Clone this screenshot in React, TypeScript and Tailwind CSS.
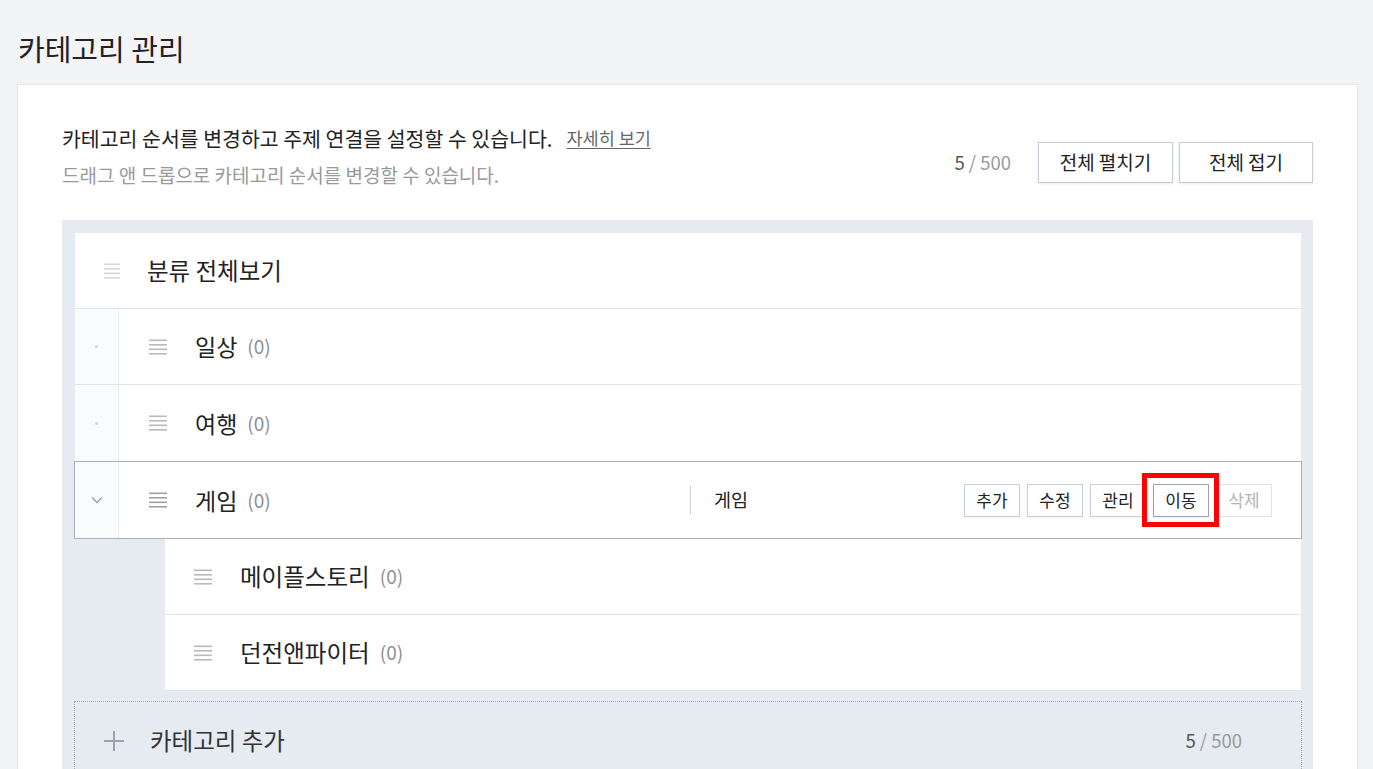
import React from "react";

function DragIcon({ color = "#b7babf", width = 18 }: { color?: string; width?: number }) {
  return (
    <svg width={width} height="16" viewBox={`0 0 ${width} 16`} className="shrink-0">
      <rect x="0" y="0.5" width={width} height="1.6" fill={color} />
      <rect x="0" y="5" width={width} height="1.6" fill={color} />
      <rect x="0" y="9.5" width={width} height="1.6" fill={color} />
      <rect x="0" y="14" width={width} height="1.6" fill={color} />
    </svg>
  );
}

function Chevron() {
  return (
    <svg width="12" height="8" viewBox="0 0 12 8">
      <polyline points="1,1.5 6,6.5 11,1.5" fill="none" stroke="#9a9ea5" strokeWidth="1.3" />
    </svg>
  );
}

function Plus() {
  return (
    <svg width="20" height="20" viewBox="0 0 20 20" className="shrink-0">
      <rect x="0" y="9" width="20" height="2" fill="#9aa2ad" />
      <rect x="9" y="0" width="2" height="20" fill="#9aa2ad" />
    </svg>
  );
}

function Count() {
  return <span className="ml-[10px] text-[19px] text-[#8b9099]">(0)</span>;
}

function Dot() {
  return <span className="block h-[3px] w-[3px] rounded-full bg-[#d2d5da]" />;
}

function LeftCol({ children }: { children?: React.ReactNode }) {
  return (
    <div className="flex h-full w-[44px] shrink-0 items-center justify-center border-r border-[#eceef2] bg-[#fafbfc]">
      {children}
    </div>
  );
}

function SmallBtn({ label, variant = "normal" }: { label: string; variant?: "normal" | "active" | "disabled" }) {
  const cls =
    variant === "active"
      ? "border-[#9ea4ad] text-[#222] shadow-[0_1px_2px_rgba(0,0,0,0.08)]"
      : variant === "disabled"
      ? "border-[#e0e4e9] text-[#b3b5b8]"
      : "border-[#c9cfd8] text-[#222] shadow-[0_1px_2px_rgba(0,0,0,0.06)]";
  return (
    <button className={`flex h-[33px] w-[56px] items-center justify-center border bg-white text-[17px] ${cls}`}>
      {label}
    </button>
  );
}

export default function App() {
  return (
    <div className="min-h-screen bg-[#f3f4f6] font-['Noto_Sans_CJK_KR','Noto_Sans',sans-serif] text-[#222]">
      <div className="h-[84px] pl-[18px] pt-[28px]">
        <h1 className="text-[29px] leading-[40px] font-normal">카테고리 관리</h1>
      </div>
      <div className="ml-[17px] w-[1341px] border border-[#e2e5ea] bg-white px-[44px] pt-[41px] pb-[40px]">
        <div className="flex justify-between">
          <div>
            <div className="flex h-[24px] items-center">
              <span className="text-[20.5px] leading-[24px] text-[#222]">
                카테고리 순서를 변경하고 주제 연결을 설정할 수 있습니다.
              </span>
              <a className="ml-[14px] text-[17.5px] leading-[24px] text-[#666] underline underline-offset-[3px]">자세히 보기</a>
            </div>
            <p className="mt-[13px] h-[24px] text-[19px] leading-[24px] text-[#999]">
              드래그 앤 드롭으로 카테고리 순서를 변경할 수 있습니다.
            </p>
          </div>
          <div className="mt-[16px] flex items-center self-start">
            <span className="mr-[27px] text-[18.5px] text-[#999]">
              <span className="text-[#555]">5</span> / 500
            </span>
            <button className="h-[41px] w-[135px] border border-[#c6ccd5] bg-white text-[19px] text-[#222] shadow-[0_1px_2px_rgba(0,0,0,0.08)]">
              전체 펼치기
            </button>
            <button className="ml-[6px] h-[41px] w-[134px] border border-[#c6ccd5] bg-white text-[19px] text-[#222] shadow-[0_1px_2px_rgba(0,0,0,0.08)]">
              전체 접기
            </button>
          </div>
        </div>

        <div className="mt-[33px] bg-[#e6ebf2] pt-[13px] pl-[13px] pr-[12px] pb-[30px]">
          <div className="flex h-[76px] items-center border-b border-[#e1e5eb] bg-white pl-[29px]">
            <DragIcon color="#d6d8dc" width={16} />
            <span className="ml-[27px] text-[23.5px]">분류 전체보기</span>
          </div>
          <div className="flex h-[76px] items-center border-b border-[#e1e5eb] bg-white">
            <LeftCol>
              <Dot />
            </LeftCol>
            <span className="ml-[30px]">
              <DragIcon />
            </span>
            <span className="ml-[28px] text-[23px]">일상</span>
            <Count />
          </div>
          <div className="flex h-[76px] items-center bg-white">
            <LeftCol>
              <Dot />
            </LeftCol>
            <span className="ml-[30px]">
              <DragIcon />
            </span>
            <span className="ml-[28px] text-[23px]">여행</span>
            <Count />
          </div>
          <div className="-mx-[1px] flex h-[78px] items-center border border-[#a9b0bb] bg-white pr-[29px]">
            <div className="flex h-full w-[615px] shrink-0 items-center">
              <LeftCol>
                <Chevron />
              </LeftCol>
              <span className="ml-[30px]">
                <DragIcon color="#9da1a7" />
              </span>
              <span className="ml-[28px] text-[23px]">게임</span>
              <Count />
            </div>
            <div className="h-[28px] w-[1px] bg-[#c9cdd3]" />
            <span className="ml-[23px] text-[18.5px]">게임</span>
            <div className="ml-auto flex items-center gap-[7px]">
              <SmallBtn label="추가" />
              <SmallBtn label="수정" />
              <SmallBtn label="관리" />
              <div className="relative">
                <SmallBtn label="이동" variant="active" />
                <div className="pointer-events-none absolute -top-[11px] -bottom-[10px] -left-[11px] -right-[10px] border-[5px] border-[#ff0000]" />
              </div>
              <SmallBtn label="삭제" variant="disabled" />
            </div>
          </div>
          <div className="ml-[90px]">
            <div className="flex h-[76px] items-center border-b border-[#e1e5eb] bg-white pl-[29px]">
              <DragIcon />
              <span className="ml-[28px] text-[23.5px]">메이플스토리</span>
              <Count />
            </div>
            <div className="flex h-[76px] items-center border-b border-[#e1e5eb] bg-white pl-[29px]">
              <DragIcon />
              <span className="ml-[28px] text-[23.5px]">던전앤파이터</span>
              <Count />
            </div>
          </div>
          <div className="-mx-[1px] mt-[10px] flex h-[80px] items-center border border-dotted border-[#a7adb6] pl-[29px] pr-[59px]">
            <Plus />
            <span className="ml-[26px] text-[23.5px] text-[#333]">카테고리 추가</span>
            <span className="ml-auto text-[18.5px] text-[#999]">
              <span className="text-[#555]">5</span> / 500
            </span>
          </div>
        </div>
      </div>
    </div>
  );
}
